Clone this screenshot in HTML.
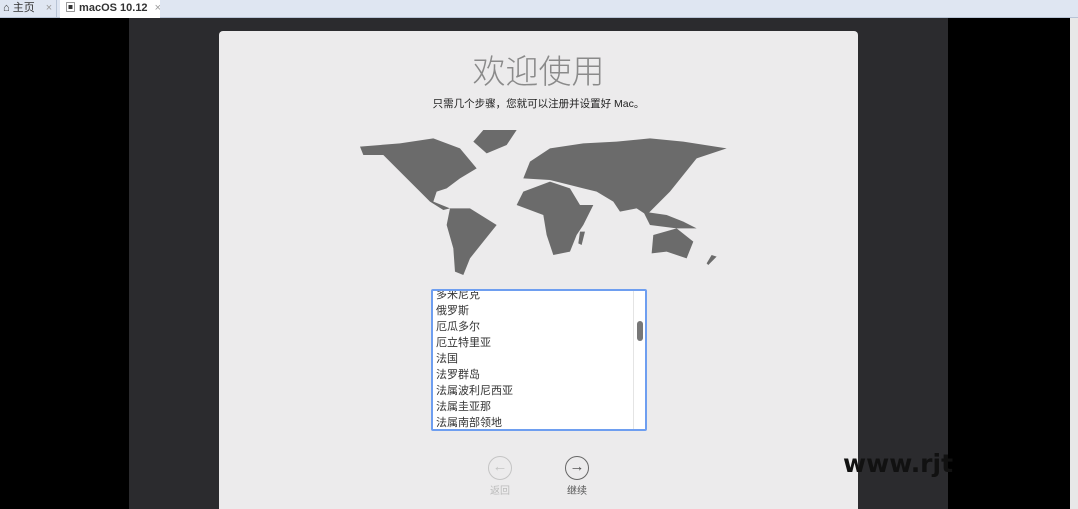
<!DOCTYPE html>
<html><head><meta charset="utf-8"><style>
*{margin:0;padding:0;box-sizing:border-box}
body{width:1078px;height:509px;overflow:hidden;background:#000;position:relative;font-family:"Liberation Sans","Noto Sans CJK SC",sans-serif}
.tabbar{position:absolute;left:0;top:0;width:1078px;height:18px;background:#dfe6f2;border-bottom:1px solid #b8c4d6}
.tab{position:absolute;top:0;height:18px;font-size:11px;line-height:17px;color:#333;white-space:nowrap;overflow:hidden}
.dark{position:absolute;left:129px;top:18px;width:819px;height:491px;background:#2b2b2e}
.sb{position:absolute;left:1070px;top:18px;width:8px;height:491px;background:#e8e8e8}
.panel{position:absolute;left:219px;top:31px;width:639px;height:478px;background:#ecebec;border-radius:4px 4px 0 0}
.title{position:absolute;left:0;width:639px;top:14px;text-align:center;font-size:33px;color:#8a8a8a;font-weight:300;font-family:"Noto Sans CJK SC",sans-serif}
.sub{position:absolute;left:0;width:639px;top:65px;text-align:center;font-size:10.5px;color:#222}
.list{position:absolute;left:431px;top:289px;width:216px;height:142px;border:2px solid #6e9ef0;border-radius:2px;background:#fff;overflow:hidden}
.list div{height:16px;font-size:11px;line-height:16px;padding-left:3px;color:#333}
.btn{position:absolute;width:24px;height:24px;border-radius:50%;border:1.5px solid}
.lbl{position:absolute;font-size:10px}
</style></head><body>
<div class="tabbar">
 <div class="tab" style="left:0;width:57px;border-right:1px solid #b8c4d6;padding-left:3px">⌂ 主页 <span style="color:#999;margin-left:8px">×</span></div>
 <div class="tab" style="left:60px;width:100px;background:#fff;padding-left:5px;font-weight:bold">▣ macOS 10.12 <span style="color:#999;font-weight:normal;margin-left:4px">×</span></div>
</div>
<div class="dark"></div>
<div class="sb"></div>
<div class="panel">
 <div class="title">欢迎使用</div>
 <div class="sub">只需几个步骤，您就可以注册并设置好 Mac。</div>
</div>
<svg style="position:absolute;left:0;top:0" width="1078" height="509">
<g transform="translate(350,125) scale(0.3333)" fill="#6b6b6b">
<polygon points="30,65 150,55 250,40 330,70 380,130 330,160 290,190 260,200 250,230 300,250 280,255 240,230 210,200 160,150 100,90 40,90"/>
<polygon points="400,15 500,15 470,60 410,85 370,50"/>
<polygon points="300,250 360,250 440,300 400,350 360,400 340,450 315,440 310,370 290,300"/>
<polygon points="520,200 600,170 660,190 690,240 730,240 700,300 680,330 660,380 610,390 590,330 580,270 500,240"/>
<polygon points="520,160 540,110 600,70 700,55 800,50 900,40 1000,50 1130,70 1040,100 1000,150 960,200 930,230 890,270 860,250 810,260 790,230 740,200 700,190 660,180 600,165"/>
<polygon points="880,260 950,270 1000,290 1040,310 980,310 900,300"/>
<polygon points="910,330 980,310 1030,350 1010,400 950,380 905,385"/>
<polygon points="690,320 705,320 695,360 685,355"/>
<polygon points="1085,390 1100,395 1075,420 1070,415"/>
</g>
</svg>
<div class="list">
 <div style="margin-top:-4px">多米尼克</div><div>俄罗斯</div><div>厄瓜多尔</div><div>厄立特里亚</div><div>法国</div><div>法罗群岛</div><div>法属波利尼西亚</div><div>法属圭亚那</div><div>法属南部领地</div>
 <div style="position:absolute;left:200px;top:0;width:1px;height:140px;background:#e4e4e4;padding:0"></div>
 <div style="position:absolute;left:204px;top:30px;width:6px;height:20px;border-radius:3px;background:#777;padding:0"></div>
</div>
<div class="btn" style="left:488px;top:456px;border-color:#c4c4c4"></div>
<div style="position:absolute;left:488px;top:456px;width:24px;height:24px;text-align:center;line-height:22px;color:#c4c4c4;font-size:15px">←</div>
<div class="lbl" style="left:490px;top:482px;color:#bbb">返回</div>
<div class="btn" style="left:565px;top:456px;border-color:#666"></div>
<div style="position:absolute;left:565px;top:456px;width:24px;height:24px;text-align:center;line-height:22px;color:#555;font-size:15px">→</div>
<div class="lbl" style="left:567px;top:482px;color:#555">继续</div>
<div style="position:absolute;left:843px;top:449px;font-size:25px;font-weight:bold;color:#111;font-family:'DejaVu Sans',sans-serif">www.rjt</div>
</body></html>
